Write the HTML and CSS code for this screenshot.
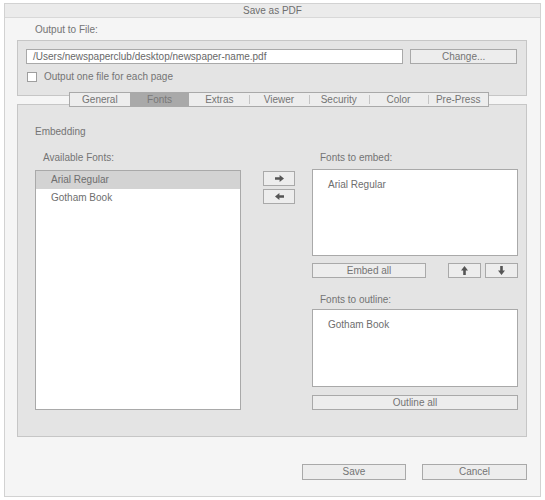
FILE: index.html
```html
<!DOCTYPE html>
<html>
<head>
<meta charset="utf-8">
<link rel="stylesheet" href="styles.css">
</head>
<body>
<div class="window">
  <div class="titlebar">Save as PDF</div>
  <div class="output-label">Output to File:</div>
  <div class="group">
    <div class="file-row">
      <div class="path-input">/Users/newspaperclub/desktop/newspaper-name.pdf</div>
      <div class="btn change-btn">Change...</div>
    </div>
    <div class="check-row">
      <span class="checkbox"></span>
      <span class="check-label">Output one file for each page</span>
    </div>
  </div>
  <div class="tabs">
    <div class="tab">General</div>
    <div class="tab active">Fonts</div>
    <div class="tab">Extras</div>
    <div class="tab sep">Viewer</div>
    <div class="tab sep">Security</div>
    <div class="tab sep">Color</div>
    <div class="tab sep">Pre-Press</div>
  </div>
  <div class="panel">
    <div class="section-label">Embedding</div>
    <div class="columns">
      <div class="col left-col">
        <div class="col-label">Available Fonts:</div>
        <div class="list avail-list">
          <div class="row selected">Arial Regular</div>
          <div class="row">Gotham Book</div>
        </div>
      </div>
      <div class="col mid-col">
        <div class="btn arrow-btn">
          <svg width="9" height="7" viewBox="0 0 9 7"><path d="M0 2.2h4.6V0L9 3.5 4.6 7V4.8H0z" fill="#555"/></svg>
        </div>
        <div class="btn arrow-btn second">
          <svg width="9" height="7" viewBox="0 0 9 7"><path d="M9 2.2H4.4V0L0 3.5 4.4 7V4.8H9z" fill="#555"/></svg>
        </div>
      </div>
      <div class="col right-col">
        <div class="col-label">Fonts to embed:</div>
        <div class="list embed-list">
          <div class="item">Arial Regular</div>
        </div>
        <div class="embed-row">
          <div class="btn embed-all">Embed all</div>
          <div class="btn updown">
            <svg width="7" height="9" viewBox="0 0 7 9"><path d="M2.2 9V4.4H0L3.5 0 7 4.4H4.8V9z" fill="#555"/></svg>
          </div>
          <div class="btn updown">
            <svg width="7" height="9" viewBox="0 0 7 9"><path d="M2.2 0v4.6H0L3.5 9 7 4.6H4.8V0z" fill="#555"/></svg>
          </div>
        </div>
        <div class="col-label outline-label">Fonts to outline:</div>
        <div class="list outline-list">
          <div class="item">Gotham Book</div>
        </div>
        <div class="btn outline-all">Outline all</div>
      </div>
    </div>
  </div>
  <div class="footer">
    <div class="btn save-btn">Save</div>
    <div class="btn cancel-btn">Cancel</div>
  </div>
</div>
</body>
</html>
```
FILE: styles.css
```css
* { box-sizing: border-box; }
body {
  margin: 0;
  background: #ffffff;
  font-family: "Liberation Sans", Arial, sans-serif;
  font-size: 10px;
  color: #747474;
}
.window {
  margin: 3px 0 0 4px;
  width: 537px;
  height: 494px;
  border: 1px solid #d2d2d2;
  background: #f5f5f5;
}
.titlebar {
  height: 14px;
  line-height: 13px;
  border-bottom: 1px solid #d8d8d8;
  background: #ebebeb;
  text-align: center;
  color: #6e6e6e;
}
.output-label {
  margin: 6px 0 0 30px;
  line-height: 12px;
}
.group {
  margin: 4px 13px 0 12px;
  height: 56px;
  border: 1px solid #c6c6c6;
  background: #e4e4e4;
  padding: 8px 9px 0 8px;
}
.file-row { display: flex; }
.path-input {
  width: 378px;
  height: 15px;
  line-height: 13px;
  background: #fff;
  border: 1px solid #a9a9a9;
  padding-left: 6px;
  color: #686868;
}
.btn {
  height: 15px;
  line-height: 13px;
  background: #ededed;
  border: 1px solid #a9a9a9;
  text-align: center;
  color: #747474;
}
.change-btn { width: 107px; margin-left: 7px; }
.check-row {
  display: flex;
  align-items: center;
  margin-top: 7px;
  margin-left: 1px;
}
.checkbox {
  width: 10px;
  height: 10px;
  background: #fff;
  border: 1px solid #9e9e9e;
}
.check-label { margin-left: 7px; line-height: 12px; }
.tabs {
  position: relative;
  z-index: 1;
  display: flex;
  width: 420px;
  height: 15px;
  margin: -4px 0 0 64px;
  border: 1px solid #a9a9a9;
  background: #ededed;
}
.tab {
  position: relative;
  flex: 1;
  text-align: center;
  line-height: 13px;
  color: #747474;
}
.tab.active {
  background: #a9a9a9;
  color: #787878;
}
.tab.sep::before {
  content: "";
  position: absolute;
  left: 0;
  top: 2px;
  height: 9px;
  border-left: 1px solid #c4c4c4;
}
.panel {
  margin: -3px 13px 0 12px;
  height: 333px;
  border: 1px solid #c6c6c6;
  background: #e4e4e4;
  padding: 21px 0 0 17px;
}
.section-label { line-height: 12px; }
.columns {
  display: flex;
  margin-top: 14px;
}
.col { display: flex; flex-direction: column; }
.left-col { width: 206px; }
.col-label { line-height: 12px; margin-left: 8px; }
.list {
  background: #fff;
  border: 1px solid #a9a9a9;
}
.avail-list { margin-top: 6px; height: 240px; }
.row {
  height: 18px;
  line-height: 17px;
  padding-left: 15px;
  color: #6e6e6e;
}
.row.selected { background: #d3d3d3; }
.mid-col { width: 32px; margin-left: 22px; padding-top: 19px; }
.arrow-btn {
  width: 32px;
  display: flex;
  align-items: center;
  justify-content: center;
}
.arrow-btn.second { margin-top: 3px; }
.right-col { width: 206px; margin-left: 17px; }
.embed-list { margin-top: 5px; height: 87px; }
.item {
  padding: 8px 0 0 15px;
  line-height: 14px;
  color: #6e6e6e;
}
.embed-row {
  display: flex;
  margin-top: 7px;
}
.embed-all { width: 114px; }
.updown {
  width: 33px;
  display: flex;
  align-items: center;
  justify-content: center;
  margin-left: 4px;
}
.embed-all + .updown { margin-left: 22px; }
.outline-label { margin-top: 16px; }
.outline-list { margin-top: 3px; height: 78px; }
.outline-all { margin-top: 8px; width: 206px; }
.footer {
  display: flex;
  justify-content: flex-end;
  margin: 27px 13px 0 0;
}
.save-btn { width: 104px; height: 16px; line-height: 14px; }
.cancel-btn { width: 105px; height: 16px; line-height: 14px; margin-left: 16px; }
```
